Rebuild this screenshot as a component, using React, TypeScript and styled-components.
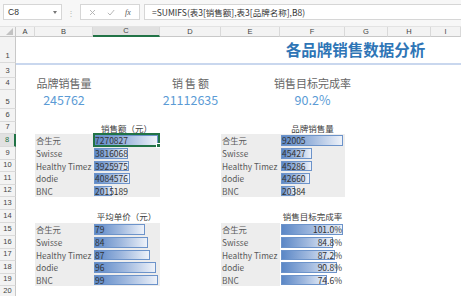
import styled, { createGlobalStyle, css } from "styled-components";

const GlobalStyle = createGlobalStyle`
  html, body {
    margin: 0;
    padding: 0;
    background: #ffffff;
  }
  body {
    width: 461px;
    height: 296px;
    overflow: hidden;
    font-family: "Noto Sans CJK SC", "Liberation Sans", sans-serif;
  }
  * {
    box-sizing: border-box;
  }
`;

const Toolbar = styled.div`
  height: 27px;
  display: flex;
  align-items: flex-start;
  padding: 4px 0 0 3px;
  background: #f7f7f7;
  border-bottom: 1px solid #e3e3e3;
`;

const NameBox = styled.div`
  width: 59px;
  height: 16px;
  display: flex;
  align-items: center;
  justify-content: space-between;
  padding: 0 4px;
  background: #fff;
  border: 1px solid #d6d6d6;
  font: 8.5px "Liberation Sans", sans-serif;
  color: #333;
`;

const Caret = styled.span`
  width: 0;
  height: 0;
  border-left: 2.5px solid transparent;
  border-right: 2.5px solid transparent;
  border-top: 3px solid #777;
`;

const Dots = styled.div`
  width: 18px;
  height: 16px;
  display: flex;
  align-items: center;
  justify-content: center;
  color: #b5b5b5;
  font-size: 8px;
`;

const ButtonBox = styled.div`
  width: 60px;
  height: 16px;
  display: flex;
  align-items: center;
  justify-content: space-around;
  padding: 0 3px;
  background: #fff;
  border: 1px solid #d6d6d6;
`;

const Fx = styled.span`
  font: italic 8px "Liberation Serif", serif;
  color: #555;
`;

const FormulaInput = styled.div`
  flex: 1;
  height: 16px;
  margin-left: 4px;
  display: flex;
  align-items: center;
  padding-left: 7px;
  background: #fff;
  border: 1px solid #d6d6d6;
  border-right: none;
  font-size: 8.5px;
  color: #333;
  white-space: nowrap;
`;

const Sheet = styled.div`
  display: grid;
  grid-template-columns: 16px 19px 58px 67px 61px 59px 65px 43px 43px 1fr;
  grid-template-rows:
    10px 26px 2px 13px 12px 19px 13px 12px 13px 12.5px 12.5px 13px 12px
    13px 13px 13px 12.5px 12.5px 13px 12px 12px;
  background: #fff;
  line-height: 1;
`;

type PlaceProps = { $col: number; $row: number; $span?: number };

const placed = css<PlaceProps>`
  grid-column: ${(p) => p.$col} / span ${(p) => p.$span ?? 1};
  grid-row: ${(p) => p.$row};
`;

const Corner = styled.div`
  grid-column: 1;
  grid-row: 1;
  display: flex;
  align-items: flex-end;
  justify-content: flex-end;
  padding: 0 2px 1px 0;
  background: #f3f3f3;
  border-right: 1px solid #c8c8c8;
  border-bottom: 1px solid #c8c8c8;
`;

const ColHead = styled.div<PlaceProps & { $active?: boolean }>`
  ${placed};
  display: flex;
  align-items: center;
  justify-content: center;
  background: ${(p) => (p.$active ? "#e1e1e1" : "#f3f3f3")};
  border-right: 1px solid #d9d9d9;
  border-bottom: ${(p) => (p.$active ? "2px solid #217346" : "1px solid #c8c8c8")};
  font: 7.5px/1 "Liberation Sans", sans-serif;
  color: #444;
`;

const RowHead = styled.div<PlaceProps & { $active?: boolean }>`
  ${placed};
  display: flex;
  align-items: flex-end;
  justify-content: center;
  padding-bottom: 2px;
  overflow: hidden;
  background: ${(p) => (p.$active ? "#e1e1e1" : "#f3f3f3")};
  border-right: ${(p) => (p.$active ? "2px solid #217346" : "1px solid #c8c8c8")};
  border-bottom: 1px solid #dadada;
  font: 7.5px/8px "Liberation Sans", sans-serif;
  color: ${(p) => (p.$active ? "#217346" : "#444")};
`;

const TitleCell = styled.div<PlaceProps>`
  ${placed};
  display: flex;
  align-items: center;
  justify-content: center;
  font-size: 15.5px;
  font-weight: bold;
  color: #2e75b6;
  white-space: nowrap;
`;

const Band = styled.div<PlaceProps>`
  ${placed};
  background: #c9d7ee;
`;

const KpiLabel = styled.div<PlaceProps & { $wide?: boolean }>`
  ${placed};
  display: flex;
  align-items: center;
  justify-content: center;
  padding-left: ${(p) => (p.$wide ? "2px" : "0")};
  padding-bottom: 1px;
  font-size: 11px;
  letter-spacing: ${(p) => (p.$wide ? "2px" : "0")};
  color: #666;
  white-space: nowrap;
`;

const KpiValue = styled.div<PlaceProps>`
  ${placed};
  display: flex;
  align-items: center;
  justify-content: center;
  padding-top: 2px;
  font-size: 12.5px;
  color: #5b9bd5;
`;

const ChartTitle = styled.div<PlaceProps>`
  ${placed};
  display: flex;
  align-items: center;
  justify-content: center;
  font-size: 8.5px;
  color: #404040;
  white-space: nowrap;
`;

const LabelCell = styled.div<PlaceProps>`
  ${placed};
  display: flex;
  align-items: center;
  padding-left: 1px;
  background: #ededed;
  font-size: 8.3px;
  color: #595959;
  white-space: nowrap;
  overflow: hidden;
`;

const BarCell = styled.div<PlaceProps & { $shade?: boolean }>`
  ${placed};
  position: relative;
  display: grid;
  padding: 1px 2px 1px 1px;
  background: ${(p) => (p.$shade ? "#ededed" : "#fff")};
`;

const Fill = styled.div`
  grid-area: 1 / 1;
  height: 100%;
  border: 1px solid #6c93ca;
  background: linear-gradient(90deg, #5b87c6 0%, #9fb8de 50%, #eef2f9 100%);
`;

const BarText = styled.span<{ $right?: boolean }>`
  grid-area: 1 / 1;
  align-self: center;
  justify-self: ${(p) => (p.$right ? "end" : "start")};
  padding: 0 1px;
  font-size: 8.5px;
  line-height: 1;
  color: #333;
  z-index: 1;
`;

const SelectionFrame = styled.div`
  position: absolute;
  inset: -1px 0 0 0;
  border: 2px solid #217346;
  z-index: 2;
`;

const FillHandle = styled.span`
  position: absolute;
  right: -3px;
  bottom: -3px;
  width: 5px;
  height: 5px;
  background: #217346;
  border: 1px solid #fff;
`;

const brands = ["合生元", "Swisse", "Healthy Timez", "dodie", "BNC"];
const sales = [7270827, 3816068, 3925975, 4084576, 2015189];
const volume = [92005, 45427, 45286, 42660, 20384];
const price = [79, 84, 87, 96, 99];
const rate = [101.0, 84.8, 87.2, 90.8, 74.6];

const columns = ["A", "B", "C", "D", "E", "F", "G", "H", "I"];
const rowNumbers = Array.from({ length: 20 }, (_, i) => i + 1);

// sheet row -> grid row (grid row 1 is the column header)
const r = (n: number) => n + 1;
const pct = (v: number, max: number) => `${(v / max) * 100}%`;

interface ChartProps {
  labelCol: number;
  barCol: number;
  firstRow: number;
  values: number[];
  shade: boolean;
  right?: boolean;
  format?: (v: number) => string;
  selectFirst?: boolean;
}

function BarChart({ labelCol, barCol, firstRow, values, shade, right, format, selectFirst }: ChartProps) {
  const max = Math.max(...values);
  return (
    <>
      {brands.map((name, i) => (
        <LabelCell key={`l${name}`} $col={labelCol} $row={r(firstRow + i)}>
          {name}
        </LabelCell>
      ))}
      {values.map((v, i) => (
        <BarCell key={`b${i}`} $col={barCol} $row={r(firstRow + i)} $shade={shade}>
          <Fill style={{ width: pct(v, max) }} />
          <BarText $right={right}>{format ? format(v) : v}</BarText>
          {selectFirst && i === 0 && (
            <SelectionFrame>
              <FillHandle />
            </SelectionFrame>
          )}
        </BarCell>
      ))}
    </>
  );
}

function App() {
  return (
    <>
      <GlobalStyle />
      <Toolbar>
        <NameBox>
          C8
          <Caret />
        </NameBox>
        <Dots>⋮</Dots>
        <ButtonBox>
          <svg width="7" height="7" viewBox="0 0 7 7">
            <path d="M1 1L6 6M6 1L1 6" stroke="#b0b0b0" strokeWidth="0.9" />
          </svg>
          <svg width="8" height="7" viewBox="0 0 8 7">
            <path d="M0.8 3.8L3 6L7.2 1" stroke="#b0b0b0" strokeWidth="0.9" fill="none" />
          </svg>
          <Fx>fx</Fx>
        </ButtonBox>
        <FormulaInput>=SUMIFS(表3[销售额],表3[品牌名称],B8)</FormulaInput>
      </Toolbar>

      <Sheet>
        <Corner>
          <svg width="7" height="7" viewBox="0 0 7 7">
            <polygon points="7,0 7,7 0,7" fill="#c2c2c2" />
          </svg>
        </Corner>
        {columns.map((c, i) => (
          <ColHead key={c} $col={i + 2} $row={1} $active={c === "C"}>
            {c}
          </ColHead>
        ))}
        {rowNumbers.map((n) => (
          <RowHead key={n} $col={1} $row={r(n)} $active={n === 8}>
            {n === 2 ? "" : n}
          </RowHead>
        ))}

        <TitleCell $col={7} $row={r(1)} $span={3}>
          各品牌销售数据分析
        </TitleCell>
        <Band $col={2} $row={r(2)} $span={9} />

        <KpiLabel $col={3} $row={r(4)}>品牌销售量</KpiLabel>
        <KpiLabel $col={5} $row={r(4)} $wide>
          销售额
        </KpiLabel>
        <KpiLabel $col={7} $row={r(4)}>销售目标完成率</KpiLabel>
        <KpiValue $col={3} $row={r(5)}>245762</KpiValue>
        <KpiValue $col={5} $row={r(5)}>21112635</KpiValue>
        <KpiValue $col={7} $row={r(5)}>90.2%</KpiValue>

        <ChartTitle $col={4} $row={r(7)}>销售额（元）</ChartTitle>
        <ChartTitle $col={7} $row={r(7)}>品牌销售量</ChartTitle>
        <BarChart labelCol={3} barCol={4} firstRow={8} values={sales} shade selectFirst />
        <BarChart labelCol={6} barCol={7} firstRow={8} values={volume} shade />

        <ChartTitle $col={4} $row={r(14)}>平均单价（元）</ChartTitle>
        <ChartTitle $col={7} $row={r(14)}>销售目标完成率</ChartTitle>
        <BarChart labelCol={3} barCol={4} firstRow={15} values={price} shade />
        <BarChart
          labelCol={6}
          barCol={7}
          firstRow={15}
          values={rate}
          shade={false}
          right
          format={(v) => `${v.toFixed(1)}%`}
        />
      </Sheet>
    </>
  );
}

export default App;
